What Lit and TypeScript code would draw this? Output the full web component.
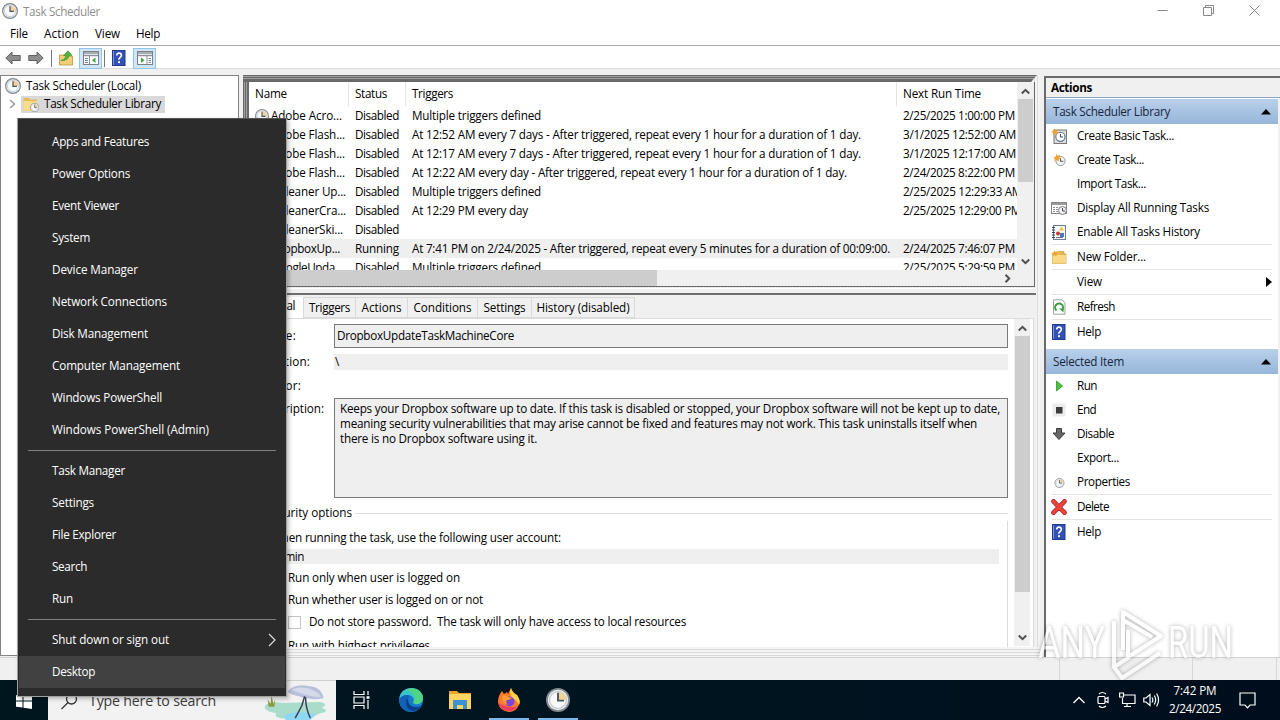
import { LitElement, html, svg, css, nothing } from "lit";
import { customElement } from "lit/decorators.js";
import { classMap } from "lit/directives/class-map.js";

/** A run of text set to a given advance width (px). */
const t = (text: string, w: number) => text ? html`<span class="t" data-w=${w}>${text}</span>` : nothing;

const clockShapes = svg`
  <circle cx="8" cy="8" r="7.4" fill="#e9eef2" stroke="#85898c" stroke-width="1.2"/>
  <circle cx="8" cy="8" r="5.6" fill="#f7f9fa" stroke="#bcc6cc" stroke-width=".7"/>
  <path d="M8 8V2.6A5.4 5.4 0 0 1 13.4 8Z" fill="#f5d397"/>
  <path d="M8 3.2V8.4H12" fill="none" stroke="#4c5a66" stroke-width="1.3"/>`;
const clock = (s: number) => html`<svg class="ico" width=${s} height=${s} viewBox="0 0 16 16">${clockShapes}</svg>`;

const icons: Record<string, any> = {
  none: nothing,
  basic: svg`<rect x="3" y="2" width="12.5" height="13.5" fill="#dedede" stroke="#777"/><circle cx="9.4" cy="8.8" r="4.6" fill="#fff" stroke="#5d7286" stroke-width="1.1"/><path d="M9.4 6V9H12" stroke="#345" fill="none"/><path d="M3.5 0l.9 2.2L6.8 1.4 5.8 3.6 8 4.6 5.6 5.2 5.6 7.4 3.8 5.8 1.6 7 2.2 4.8 0 3.8 2.4 3z" fill="#f0a230"/>`,
  task: svg`<circle cx="9.5" cy="9" r="4.6" fill="#f3f3f0" stroke="#999"/><path d="M9.5 6.2V9.3H12.4" stroke="#456" fill="none"/><path d="M5.500 1.500l1 2.200L9 2.700 8.200 5.200 10.500 6.200 8 7 7.800 9.500 5.800 7.800 3.400 9.200 4 6.800 1.600 5.800 4.500 5z" fill="#f0a230"/>`,
  running: svg`<rect x=".5" y="2.5" width="15" height="11" fill="#fff" stroke="#858585"/><path d="M1 4H15" stroke="#9a9a9a" stroke-width="2"/><path d="M2 7.5H8M2 9.5H7M2 11.500H7" stroke="#8996a0" stroke-dasharray="2 1"/><circle cx="11.5" cy="10.500" r="4" fill="#f2f2f2" stroke="#777"/><path d="M11.500 8V11H14" stroke="#445" fill="none"/>`,
  history: svg`<rect x="2.500" y="1.500" width="12" height="14" fill="#f4f7fb" stroke="#6c7f93"/><path d="M1 3.500H4M1 6H4M1 8.500H4M1 11H4M1 13.500H4" stroke="#345"/><path d="M10.500 2.500l2.500 4H8z" fill="#f3c52e"/><circle cx="7" cy="9.500" r="2" fill="#c83a2a"/><rect x="9" y="9" width="4" height="4" fill="#4a7ac0"/><path d="M5 13.500h7" stroke="#678"/>`,
  folder: svg`<path d="M1.500 4H6l1.500-1.500H13V5H15V14.500H1.500z" fill="#e7b850" stroke="#c89a3a" stroke-width=".7"/><path d="M1.500 6H15V14.500H1.500z" fill="#f8d987"/><path d="M3.500 1l.8 1.900L6.500 2l-.8 2 2 1-2.200.5v2L3.800 6 2 7.300l.4-2-2-.9L2.600 3.600z" fill="#f0a230"/>`,
  refresh: svg`<path d="M2.500 .8H11l3 3V15.200H2.500z" fill="#fff" stroke="#8d9a8d" stroke-width=".9"/><path d="M5.500 11.500A4 4 0 1 1 10.800 11.400" fill="none" stroke="#3a9c3f" stroke-width="1.900"/><path d="M8 9.500h4.500v4z" fill="#3a9c3f"/>`,
  help: svg`<rect x="1.500" y=".5" width="12.500" height="15" fill="#3350b5" stroke="#23398c"/><path d="M2.500 1V15" stroke="#7f95dc"/><path d="M5.700 5.500Q5.700 3.200 8 3.200T10.400 5.300Q10.400 6.600 9 7.600T8 9.800" fill="none" stroke="#fff" stroke-width="1.700"/><rect x="7.100" y="11.200" width="1.900" height="1.900" fill="#fff"/>`,
  run: svg`<path d="M5.500 3L11.500 8 5.500 13z" fill="#4cc23a" stroke="#2d9427" stroke-width=".8"/>`,
  end: svg`<rect x="1.500" y="1.500" width="13" height="13" fill="#ececec"/><rect x="5" y="5" width="6.500" height="6.500" fill="#3d3d3d"/>`,
  disable: svg`<path d="M5.500 2.500h5v4.500H14L8 13.500 2 7H5.500z" fill="#666" stroke="#3c3c3c"/>`,
  props: svg`<g transform="translate(3.500 4) scale(.62)">${clockShapes}</g>`,
  del: svg`<path d="M2.500 2.300L13.500 13.700M13.500 2.300L2.500 13.700" stroke="#b02020" stroke-width="4.600" stroke-linecap="round"/><path d="M2.500 2.300L13.500 13.700M13.500 2.300L2.500 13.700" stroke="#e8443c" stroke-width="3.200" stroke-linecap="round"/>`,
  libfolder: svg`<path d="M.5 2H6l1.500 1.500H14V14.500H.5z" fill="#e5bb57"/><path d="M.5 5H14V14.500H.5z" fill="#f9dd8d"/><g transform="translate(7 6.800) scale(.58)">${clockShapes}</g>`,
  up: svg`<path d="M1.500 5H6l1.300 1.300H14.500V15H1.500z" fill="#f3cf78" stroke="#b9923f" stroke-width=".8"/><path d="M4 10.500Q8.500 10 9 5.500H6.500L11 .8 15 5.500H12Q11 11 4 10.500z" fill="#52b33c" stroke="#35852a" stroke-width=".6" transform="translate(-1)"/>`,
  pane: svg`<rect x=".5" y="1.500" width="15" height="13" fill="#fff" stroke="#7c8288"/><path d="M1 3H15M1 5.500H15" stroke="#8b9298" stroke-width="1.500"/><path d="M6.500 6V14" stroke="#8b9298"/><path d="M2 8.500H5M2 10.500H5M2 12.500H5" stroke="#6f86a0"/><path d="M12.500 7.500V13L9 10.200z" fill="#3fa63a"/>`,
  pane2: svg`<rect x=".5" y="1.500" width="15" height="13" fill="#fff" stroke="#7c8288"/><path d="M1 3H15M1 5.500H15" stroke="#8b9298" stroke-width="1.500"/><path d="M10 6V14" stroke="#8b9298"/><path d="M11.500 8.500H14M11.500 10.500H14M11.500 12.500H14" stroke="#6f86a0"/><path d="M4 7.500V13L7.500 10.200z" fill="#3fa63a"/>`,
  back: svg`<path d="M.8 8L7 2V5.500H15.200V10.500H7V14z" fill="#8d8d8d" stroke="#616161"/>`,
  fwd: svg`<path d="M15.200 8L9 2V5.500H.8V10.500H9V14z" fill="#8d8d8d" stroke="#616161"/>`,
};
const icon = (n: string) => html`<svg class="ico" width="16" height="16" viewBox="0 0 16 16">${icons[n]}</svg>`;
const chev = (d: string) => html`<svg width="9" height="9" viewBox="0 0 9 9"><path d=${d} fill="none" stroke="#505050" stroke-width="2"/></svg>`;
const UP = "M.8 6.500L4.500 2.800L8.200 6.500";
const DOWN = "M.8 2.500L4.500 6.200L8.200 2.500";
const RIGHT = "M2.500 .8L6.200 4.500L2.500 8.200";

type Cell = [string, number];
const rows: { name: Cell; status: Cell; trig: Cell; next: Cell; sel?: boolean }[] = [
  { name: ["Adobe Acro...", 71], status: ["Disabled", 44], trig: ["Multiple triggers defined", 129], next: ["2/25/2025 1:00:00 PM", 112] },
  { name: ["Adobe Flash...", 74], status: ["Disabled", 44], trig: ["At 12:52 AM every 7 days - After triggered, repeat every 1 hour for a duration of 1 day.", 449], next: ["3/1/2025 12:52:00 AM", 113] },
  { name: ["Adobe Flash...", 74], status: ["Disabled", 44], trig: ["At 12:17 AM every 7 days - After triggered, repeat every 1 hour for a duration of 1 day.", 449], next: ["3/1/2025 12:17:00 AM", 113] },
  { name: ["Adobe Flash...", 74], status: ["Disabled", 44], trig: ["At 12:22 AM every day - After triggered, repeat every 1 hour for a duration of 1 day.", 435], next: ["2/24/2025 8:22:00 PM", 112] },
  { name: ["CCleaner Up...", 75], status: ["Disabled", 44], trig: ["Multiple triggers defined", 129], next: ["2/25/2025 12:29:33 AM", 119] },
  { name: ["CCleanerCra...", 75], status: ["Disabled", 44], trig: ["At 12:29 PM every day", 116], next: ["2/25/2025 12:29:00 PM", 118] },
  { name: ["CCleanerSki...", 72], status: ["Disabled", 44], trig: ["", 0], next: ["", 0] },
  { name: ["DropboxUp...", 69], status: ["Running", 44], trig: ["At 7:41 PM on 2/24/2025 - After triggered, repeat every 5 minutes for a duration of 00:09:00.", 478], next: ["2/24/2025 7:46:07 PM", 112], sel: true },
  { name: ["GoogleUpda...", 72], status: ["Disabled", 44], trig: ["Multiple triggers defined", 129], next: ["2/25/2025 5:29:59 PM", 112] },
];

type Action = [string, string, number] | "-";
const library: Action[] = [
  ["basic", "Create Basic Task...", 97], ["task", "Create Task...", 67], ["none", "Import Task...", 69],
  ["running", "Display All Running Tasks", 132], ["history", "Enable All Tasks History", 123], "-",
  ["folder", "New Folder...", 69], "-", ["none", "View", 25], "-", ["refresh", "Refresh", 38], "-", ["help", "Help", 24],
];
const selected: Action[] = [
  ["run", "Run", 20], ["end", "End", 19], ["disable", "Disable", 37], ["none", "Export...", 42],
  ["props", "Properties", 53], "-", ["del", "Delete", 32], "-", ["help", "Help", 24],
];
const menu: (Cell | "-")[] = [
  ["Apps and Features", 97], ["Power Options", 78], ["Event Viewer", 67], ["System", 38], ["Device Manager", 86],
  ["Network Connections", 115], ["Disk Management", 96], ["Computer Management", 128], ["Windows PowerShell", 110],
  ["Windows PowerShell (Admin)", 157], "-", ["Task Manager", 73], ["Settings", 42], ["File Explorer", 64],
  ["Search", 35], ["Run", 21], "-", ["Shut down or sign out", 117], ["Desktop", 43],
];
const tabs: [string, number, number][] = [
  ["Triggers", 41, 51], ["Actions", 40, 51], ["Conditions", 58, 69], ["Settings", 42, 53], ["History (disabled)", 93, 102],
];

@customElement("app-root")
export class AppRoot extends LitElement {
  static styles = css`
    :host { display: flex; flex-direction: column; position: relative; width: 1280px; height: 720px; overflow: hidden; background: #fff;
      font: 11.7px/16px "Open Sans", "Noto Sans", sans-serif; color: #000; }
    * { box-sizing: border-box; }
    svg { display: block; flex: none; }
    .t { display: inline-block; white-space: pre; flex: none; justify-self: start; transform: translateY(-1px); }
    .title { height: 22px; flex: none; display: flex; align-items: center; padding: 0 20px 0 2px; color: #8f8f8f; }
    .title .t { margin-left: 5px; transform: none; }
    .winbtns { margin-left: auto; display: flex; gap: 35px; margin-top: -2px; }
    .menubar { height: 24px; flex: none; display: flex; gap: 16px; padding: 4px 10px; border-bottom: 1px solid #a9a9a9; }
    .toolbar { height: 23px; flex: none; display: flex; align-items: center; padding: 2px 5px 0; border-bottom: 1px solid #dcdcdc; }
    .tb { height: 21px; display: grid; place-items: center; }
    .tb.on { width: 23px; background: #cfe6f8; border: 1px solid #92c5ee; }
    .w2 { width: 2px; } .w16 { width: 16px; } .w27 { width: 27px; } .w28 { width: 28px; } .w30 { width: 30px; }
    .vsep { width: 1px; height: 17px; background: #777; }
    .main { flex: none; height: 588px; background: #f0f0f0; display: flex; padding-top: 6px; }
    .tree { width: 239px; background: #fff; border: 1px solid #828282; padding: 1px 0 0 4px; height: 581px; }
    .node { height: 18px; display: flex; align-items: center; gap: 5px; }
    .node.lib { gap: 0; padding-left: 3px; }
    .hl { display: flex; align-items: center; gap: 5px; background: #d9d9d9; height: 17px; padding: 0 4px 0 2px; margin-left: 4px; }
    .center { width: 797px; margin-left: 4px; display: flex; flex-direction: column; padding: 0 4px 0 6px;
      background: linear-gradient(90deg, #696969 1px, #a0a0a0 1px 2px, #696969 2px 3px, #a0a0a0 3px 4px, #696969 4px 6px, transparent 6px), repeating-linear-gradient(90deg, #f4f4f4 0 2px, #dcdcdc 2px 3px); }
    .frame { height: 7px; flex: none; margin: 0 -1px 0 -6px; background: linear-gradient(#696969 1px, #a0a0a0 1px 2px, #696969 2px 3px, #a0a0a0 3px 4px, #696969 4px); clip-path: polygon(0 0, 100% 0, calc(100% - 6px) 100%, 0 100%); }
    .list { height: 205px; flex: none; background: #f0f0f0; border: solid #696969; border-width: 0 1px 1px 0; display: grid; grid-template: 188px 16px / 768px 16px; width: 786px; }
    .grid { background: #fff; overflow: hidden; width: 768px; }
    .row { display: grid; grid-template-columns: 100px 57px 491px 130px; height: 19px; align-items: center; padding-left: 6px; width: 784px; }
    .row.head { height: 24px; align-items: stretch; line-height: 24px; }
    .head > div { border-right: 1px solid #e3e3e3; margin-right: 6px; }
    .head > div:last-child { border: 0; }
    .row.sel { background: #efefef; }
    .nm { display: flex; align-items: center; gap: 2px; }
    .vs { display: flex; flex-direction: column; align-items: center; background: #f0f0f0; justify-content: space-between; }
    .vs .thumb { width: 15px; background: #cdcdcd; margin: 0 0 auto; }
    .list .vs { padding: 5px 0 4px; } .list .vs .thumb { height: 83px; margin-top: 3px; }
    .hs { display: flex; align-items: center; padding-right: 5px; background: #f0f0f0; justify-content: space-between; }
    .hs .thumb { width: 408px; height: 16px; background: #cdcdcd; }
    .details { margin-top: 1px; width: 787px; height: 359px; flex: none; background: #f0f0f0; display: flex; flex-direction: column; overflow: hidden; }
    .gapbar { height: 7px; flex: none; border-top: 1px solid #fff; border-bottom: 2px solid #6d6d6d; margin-bottom: 0; }
    .tabs { display: flex; height: 23px; padding-top: 2px; flex: none; }
    .tab { border: 1px solid #d9d9d9; border-left: 0; display: flex; justify-content: center; align-items: center; flex: none; }
    .tab.gen { width: 55px; background: #fff; border: 0; justify-content: flex-end; padding: 0 8px 4px; border-right: 1px solid #d9d9d9; }
    .page { background: #fff; flex: none; border-right: 1px solid #dadada; display: flex; margin-right: 2px; height: 330px; border-top: 1px solid #dcdcdc; }
    .form { width: 765px; overflow: hidden; padding: 5px 6px 0 10px; flex: none; }
    .fr { display: grid; grid-template-columns: 75px 674px; height: 16px; align-items: center; }
    .fld { background: #efefef; align-self: stretch; padding-left: 1px; display: flex; flex-direction: column; align-items: flex-start; }
    .fr.name { height: 23px; margin-bottom: 7px; }
    .box { border: 1px solid #7a7a7a; padding: 3px 2px; }
    .fr.auth { margin-top: 8px; }
    .fr.desc { height: 100px; margin-top: 4px; align-items: start; }
    .fr.desc > .t { margin-top: 3px; }
    .desc .box { line-height: 15px; padding: 3px 5px; }
    .group { margin-top: 7px; width: 749px; display: flex; flex-direction: column; }
    .legend { display: flex; align-items: center; height: 16px; gap: 3px; margin-left: 6px; }
    .legend::after { content: ""; flex: 1; height: 1px; background: #dcdcdc; }
    .gbody { border-right: 1px solid #dcdcdc; height: 160px; padding: 9px 8px 0 12px; }
    .gbody > div { height: 22px; display: flex; align-items: center; padding-left: 17px; }
    .gbody > .when { height: 16px; padding: 0; }
    .gbody > .adm { height: 15px; padding: 0; background: #efefef; margin: 3px 0; }
    .gbody > .last { margin-top: 2px; }
    .cb { width: 13px; height: 13px; border: 1px solid #c4c4c4; background: #fff; margin-right: 8px; }
    .page .vs { width: 16px; padding: 5px 0 4px; height: 327px; } .page .vs .thumb { height: 256px; margin-top: 3px; }
    .bottom { flex: 1; margin: 0 -4px 0 0; background: repeating-linear-gradient(#f4f4f4 0 2px, #d8d8d8 2px 3px); }
    .actions { margin-left: 4px; width: 236px; height: 581px; background: #fff; border: solid #6a6a6a; border-width: 2px 0 0 2px; margin-top: 1px; box-shadow: inset -2px 0 #f0f0f0; }
    .ahead { height: 20px; background: #f0f0f0; border-bottom: 1px solid #8aa5bd; font-weight: 700; padding: 2px 5px; margin-bottom: 1px; }
    .sect { height: 25px; background: linear-gradient(#b9d0ea, #96b6da); color: #17253c; display: flex; justify-content: space-between; align-items: center; padding: 0 7px; width: 232px; }
    .act { height: 24px; display: flex; align-items: center; gap: 10px; padding: 0 7px 0 5px; }
    .act .more { margin-left: auto; }
    .asep { height: 1px; margin: 0 8px 0 6px; background: #e4e4e4; }
    .second { margin-top: 5px; }
    .status { height: 23px; flex: none; background: #f0f0f0; border-top: 1px solid #d2d2d2; display: flex; justify-content: flex-end; padding-right: 3px; }
    .status div { border-right: 1px solid #d7d7d7; } .s1 { width: 60px; } .s2 { width: 133px; } .s3 { width: 84px; }
    .task { height: 40px; flex: none; display: flex; background: linear-gradient(90deg, #00161e, #001420 60%, #000d1c); color: #fff; }
    .start { width: 48px; display: grid; place-items: center; padding-top: 2px; }
    .search { width: 288px; margin-right: 1px; background: #f2f2f2; display: flex; align-items: center; color: #3b3b3b; font-size: 14.2px; padding: 2px 0 0 13px; border-top: 1px solid #cfcfcf; line-height: 18px; }
    .search .t { margin-left: 11px; margin-right: auto; }
    .app { width: 49px; display: grid; place-items: center; }
    .app.run { box-shadow: inset 0 -2px #79b8ea; width: 40px; margin: 0 4.500px; }
    .tray { margin-left: auto; display: flex; align-items: center; padding-right: 24px; }
    .i2 { margin-left: 12px; } .i3 { margin-left: 10px; } .i4 { margin-left: 7px; }
    .time { display: flex; flex-direction: column; align-items: center; line-height: 18px; width: 56px; margin: 0 16px 0 7px; }
    .ctx { position: absolute; left: 17px; top: 118px; width: 270px; height: 579px; background: #2b2b2b; border: 1px solid #a0a0a0; border-top-color: #555; padding: 7px 1px; color: #fff; box-shadow: 2px 2px 4px rgba(0,0,0,.25); }
    .mi { height: 32px; display: flex; align-items: center; justify-content: space-between; padding: 0 9px 0 33px; }
    .mi.hov { background: #414141; }
    .msep { height: 9px; padding: 4px 9px; } .msep::before { content: ""; display: block; height: 1px; background: #808080; }
    .wm { position: absolute; left: 1030px; top: 600px; filter: drop-shadow(0 0 2px rgba(0,0,0,.5)); opacity: .6; }
    .wmt { font: 400 45px Roboto, sans-serif; }
  `;

  firstUpdated() {
    const range = document.createRange();
    this.renderRoot.querySelectorAll<HTMLElement>(".t[data-w]").forEach((el) => {
      const n = (el.textContent ?? "").length;
      range.selectNodeContents(el);
      const natural = range.getBoundingClientRect().width;
      if (n && natural) el.style.letterSpacing = `${(Number(el.dataset.w) - natural) / n}px`;
    });
  }

  private actionList(items: Action[]) {
    return items.map((a) => a === "-" ? html`<div class="asep"></div>` : html`
      <div class="act">${icon(a[0])}${t(a[1], a[2])}
        ${a[1] === "View" ? html`<svg class="more" width="12" height="12"><path d="M5 1L11 6L5 11Z"/></svg>` : nothing}</div>`);
  }

  render() {
    const tri = html`<svg width="10" height="6"><path d="M0 5.500L5 0L10 5.500Z"/></svg>`;
    return html`
      <div class="title">${clock(16)}${t("Task Scheduler", 77)}
        <div class="winbtns">
          <svg width="11" height="11" fill="none" stroke="#888"><path d="M.5 5.500H10.500"/></svg>
          <svg width="11" height="11" fill="none" stroke="#888"><path d="M.5 2.500H8.500V10.500H.5ZM2.500 2.500V.5H10.500V8.500H8.500"/></svg>
          <svg width="11" height="11" fill="none" stroke="#888"><path d="M.5 .5L10.500 10.500M10.500 .5L.5 10.500"/></svg>
        </div>
      </div>
      <div class="menubar">${t("File", 18)}${t("Action", 35)}${t("View", 25)}${t("Help", 24)}</div>
      <div class="toolbar">
        <div class="tb w16">${icon("back")}</div><div class="tb w30">${icon("fwd")}</div>
        <div class="vsep"></div><div class="tb w27">${icon("up")}</div>
        <div class="tb on">${icon("pane")}</div><div class="tb w2"></div><div class="vsep"></div>
        <div class="tb w28">${icon("help")}</div><div class="tb on">${icon("pane2")}</div>
      </div>
      <div class="main">
        <div class="tree">
          <div class="node">${clock(16)}${t("Task Scheduler (Local)", 115)}</div>
          <div class="node lib">
            <svg width="9" height="10"><path d="M2 1L6.500 5L2 9" fill="none" stroke="#9a9a9a" stroke-width="1.500"/></svg>
            <div class="hl">${icon("libfolder")}${t("Task Scheduler Library", 117)}</div>
          </div>
        </div>
        <div class="center">
          <div class="frame"></div>
          <div class="list">
            <div class="grid">
              <div class="row head"><div>${t("Name", 32)}</div><div>${t("Status", 32)}</div><div>${t("Triggers", 41)}</div><div>${t("Next Run Time", 78)}</div></div>
              ${rows.map((r) => html`<div class=${classMap({ row: true, sel: !!r.sel })}>
                <div class="nm">${clock(14)}${t(...r.name)}</div><div>${t(...r.status)}</div><div>${t(...r.trig)}</div><div>${t(...r.next)}</div></div>`)}
            </div>
            <div class="vs">${chev(UP)}<div class="thumb"></div>${chev(DOWN)}</div>
            <div class="hs"><div class="thumb"></div>${chev(RIGHT)}</div>
          </div>
          <div class="details">
            <div class="gapbar"></div>
            <div class="tabs"><div class="tab gen">${t("General", 40)}</div>
              ${tabs.map(([n, w, tw]) => html`<div class="tab" style="width:${tw + 1}px">${t(n, w)}</div>`)}</div>
            <div class="page">
              <div class="form">
                <div class="fr name">${t("Name:", 37)}<div class="fld box">${t("DropboxUpdateTaskMachineCore", 177)}</div></div>
                <div class="fr">${t("Location:", 51)}<div class="fld">${t("\\", 5)}</div></div>
                <div class="fr auth">${t("Author:", 42)}</div>
                <div class="fr desc">${t("Description:", 65)}<div class="fld box">
                  ${t("Keeps your Dropbox software up to date. If this task is disabled or stopped, your Dropbox software will not be kept up to date,", 660)}
                  ${t("meaning security vulnerabilities that may arise cannot be fixed and features may not work. This task uninstalls itself when", 637)}
                  ${t("there is no Dropbox software using it.", 197)}</div></div>
                <div class="group"><div class="legend">${t("Security options", 87)}</div>
                  <div class="gbody">
                    <div class="when">${t("When running the task, use the following user account:", 290)}</div>
                    <div class="adm">${t("Admin", 33)}</div>
                    <div>${t("Run only when user is logged on", 172)}</div>
                    <div>${t("Run whether user is logged on or not", 195)}</div>
                    <div><span class="cb"></span>${t("Do not store password.  The task will only have access to local resources", 377)}</div>
                    <div class="last">${t("Run with highest privileges", 142)}</div>
                  </div></div>
              </div>
              <div class="vs">${chev(UP)}<div class="thumb"></div>${chev(DOWN)}</div>
            </div>
          </div>
          <div class="bottom"></div>
        </div>
        <div class="actions">
          <div class="ahead">${t("Actions", 41)}</div>
          <div class="sect">${t("Task Scheduler Library", 117)}${tri}</div>
          ${this.actionList(library)}
          <div class="sect second">${t("Selected Item", 71)}${tri}</div>
          ${this.actionList(selected)}
        </div>
      </div>
      <div class="status"><div class="s1"></div><div class="s2"></div><div class="s3"></div></div>
      <div class="task">
        <div class="start"><svg width="16" height="16" fill="#fff"><path d="M0 2.300L6.500 1.400V7.500H0ZM7.500 1.200L16 0V7.500H7.500ZM0 8.500H6.500V14.600L0 13.700ZM7.500 8.500H16V16L7.500 14.800Z"/></svg></div>
        <div class="search">
          <svg width="17" height="17" fill="none" stroke="#333" stroke-width="1.300"><circle cx="10.500" cy="6" r="5"/><path d="M7 9.500L.5 16"/></svg>
          ${t("Type here to search", 127)}
          <svg width="75" height="36" viewBox="0 0 75 38">
            <path d="M3 22Q8 18 20 20L60 19Q70 21 62 25Q72 29 60 31Q50 38 30 37Q10 37 14 31Q-2 28 3 22Z" fill="#a9dccb"/>
            <path d="M22 33Q36 27 56 32L50 38H24Z" fill="#8fd8f4"/>
            <path d="M26 8Q33-1 48 2Q62 3 64 15Q50 18 38 13Q30 12 26 8Z" fill="#b9c0da"/>
            <path d="M30 6Q42 1 54 7Q60 10 61 14Q46 13 30 6Z" fill="#d5daea"/>
            <path d="M44 13L41 23L34 36M45 14Q45 26 50 36" stroke="#3b4454" stroke-width="1.600" fill="none"/>
            <path d="M6 24L5 16L8 21L9 12L11 21L13 16L12 24Z" fill="#8b9a3b"/>
          </svg>
        </div>
        <div class="app"><svg width="17" height="18" fill="none" stroke="#fff" stroke-width="1.200"><path d="M1 0V3.500H11V0M1 18V14.500H11V18M1 6H11V12H1ZM15 0V4M15 9V18"/><path d="M13.500 6.500H16.500" stroke-width="2.500"/></svg></div>
        <div class="app"><svg width="26" height="26" viewBox="0 0 26 26">
          <circle cx="13" cy="13" r="12" fill="#1479cf"/><path d="M1 12Q3 1 14 1Q25 2 25 12Q24 18 17 17Q14 16 16 13Q15 8 9 8Q4 8 1 12Z" fill="#39c4ce"/><path d="M14 1Q25 2 25 12Q24 18 17 17Q14 16 16 13Q18 6 8 3Q11 1 14 1Z" fill="#58d86c" opacity=".75"/>
          <path d="M10 12Q9 22 20 21Q16 26 9 24Q1 20 1.500 12Q6 6 12 9Q10 10 10 12Z" fill="#1260b8"/><path d="M10 12Q10 20 18 20Q21 20 23 18.500Q20 24 14 24Q7 21 8 14Q8 12 10 12Z" fill="#0c3f86"/></svg></div>
        <div class="app"><svg width="22" height="20"><path d="M0 1H8L10 3H22V19H0Z" fill="#e9a52b"/><path d="M0 4H22V19H0Z" fill="#fcd462"/><path d="M4 19V11Q4 10 5 10H17Q18 10 18 11V19H14V15H8V19Z" fill="#3c8fd4"/></svg></div>
        <div class="app run"><svg width="24" height="26" viewBox="0 0 24 26">
          <path d="M3 7L5 4L7 7L10 5L11 7L14 1Q16 6 20 8Q24 14 22 18Q19 25 12 25Q3 24 1 16Q1 10 3 7Z" fill="#ff7a2a"/><path d="M14 1Q15 6 20 8Q24 14 22 18Q20 13 15 11Q12 6 14 1Z" fill="#ffd23e"/>
          <path d="M1 15Q4 25 14 24Q20 22 22 17Q19 21 14 20Q6 20 1 15Z" fill="#f23c5c"/><circle cx="12.500" cy="14.500" r="5" fill="#7a45d8"/><path d="M5 9Q9 7 11 10L15 11Q12 13 10 13Q8 15 11 18Q5 17 5 9Z" fill="#ff9c2e"/></svg></div>
        <div class="app run">${clock(24)}</div>
        <div class="tray">
          <svg width="12" height="8" fill="none" stroke="#fff" stroke-width="1.300"><path d="M.5 7L6 1.500L11.500 7"/></svg>
          <svg class="i2" width="12" height="18" fill="none" stroke="#fff" stroke-width="1.200"><rect x="1" y="5.500" width="7" height="7" rx="1"/><path d="M8 8L11 6.500V11.500L8 10M2 3Q5 0 9 3M2 15Q5 18 9 15"/></svg>
          <svg class="i3" width="17" height="16" fill="none" stroke="#fff" stroke-width="1.200"><path d="M5 3H16V11.500H3.500V6M8 12V14.500M5 14.500H12"/><path d="M.6 1H4.500V5H.6Z"/></svg>
          <svg class="i4" width="17" height="16" fill="none" stroke="#fff" stroke-width="1.200"><path d="M.8 6H3L7 2.500V13.500L3 10H.8ZM9 5.500Q10.700 8 9 10.500M11.300 3.500Q14 8 11.300 12.500M13.600 1.500Q17.500 8 13.600 14.500"/></svg>
          <div class="time">${t("7:42 PM", 43)}${t("2/24/2025", 52)}</div>
          <svg width="17" height="17" fill="none" stroke="#fff" stroke-width="1.200"><path d="M1 1H16V13H11L8.500 15.800L6 13H1Z"/></svg>
        </div>
      </div>
      <svg class="wm" width="215" height="84" fill="#fff">
        <text class="wmt" x="8" y="58" textLength="67" lengthAdjust="spacingAndGlyphs">ANY</text>
        <text class="wmt" x="138" y="58" textLength="65" lengthAdjust="spacingAndGlyphs">RUN</text>
        <g fill="none" stroke="#fff" stroke-width="4" stroke-linejoin="round"><path d="M93 50V12L131 36L98 57"/><path d="M93 20L122 37"/><path d="M84 21V67L92 78L130 53"/><path d="M84 67L98 58V30"/></g>
      </svg>
      <div class="ctx">
        ${menu.map((m) => m === "-" ? html`<div class="msep"></div>` : html`
          <div class=${classMap({ mi: true, hov: m[0] === "Desktop" })}>${t(...m)}
            ${m[0].startsWith("Shut") ? html`<svg width="8" height="14" fill="none" stroke="#ddd" stroke-width="1.200"><path d="M1 1L7 7L1 13"/></svg>` : nothing}</div>`)}
      </div>`;
  }
}
